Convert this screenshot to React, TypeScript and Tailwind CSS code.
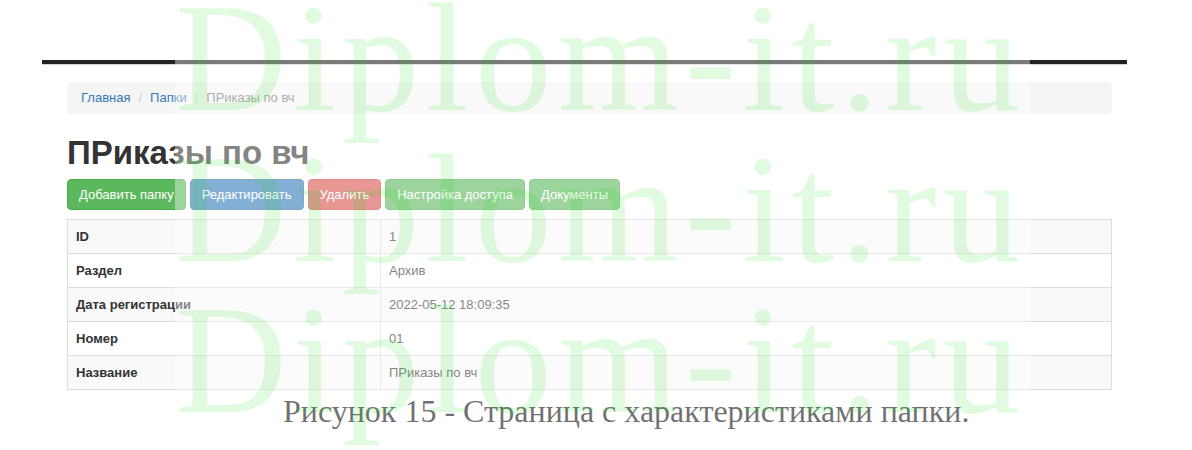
import React from 'react';

const rows: [string, string][] = [
  ['ID', '1'],
  ['Раздел', 'Архив'],
  ['Дата регистрации', '2022-05-12 18:09:35'],
  ['Номер', '01'],
  ['Название', 'ПРиказы по вч'],
];

const buttons = [
  { label: 'Добавить папку', cls: 'bg-[#5cb85c] border-[#4cae4c]' },
  { label: 'Редактировать', cls: 'bg-[#337ab7] border-[#2e6da4]' },
  { label: 'Удалить', cls: 'bg-[#d9534f] border-[#d43f3a]' },
  { label: 'Настройка доступа', cls: 'bg-[#5cb85c] border-[#4cae4c]' },
  { label: 'Документы', cls: 'bg-[#5cb85c] border-[#4cae4c]' },
];

export default function App() {
  return (
    <div className="relative h-[450px] w-[1192px] overflow-hidden bg-white font-['Liberation_Sans',Arial,sans-serif] text-[13px] text-[#333]">
      {/* top navbar line */}
      <div className="ml-[42px] w-[1085px] pt-[60px]">
        <div className="h-[4px] bg-[#222]" />
        <div className="h-px bg-[#d5d5d5]" />
      </div>

      <div className="ml-[67px] w-[1045px]">
        <div className="mt-[17px] flex h-[32px] items-center gap-[6px] rounded bg-[#f5f5f5] px-[14px] leading-[18px]">
          <span className="text-[#337ab7]">Главная</span>
          <span className="px-[2px] text-[#ccc]">/</span>
          <span className="text-[#337ab7]">Папки</span>
          <span className="px-[2px] text-[#ccc]">/</span>
          <span className="text-[#777]">ПРиказы по вч</span>
        </div>

        <h1 className="mt-[21px] text-[33px] font-semibold leading-[36px] text-[#333]">ПРиказы по вч</h1>

        <div className="mt-[8px] flex gap-[4px]">
          {buttons.map((b) => (
            <div
              key={b.label}
              className={`h-[31px] rounded border px-[11px] leading-[29px] text-white ${b.cls}`}
            >
              {b.label}
            </div>
          ))}
        </div>

        <table className="mt-[9px] w-full border-collapse border border-[#ddd]">
          <tbody>
            {rows.map(([k, v], i) => (
              <tr key={k} className={i % 2 === 0 ? 'bg-[#f9f9f9]' : 'bg-white'}>
                <th className="h-[34px] w-[313px] border border-[#ddd] px-[8px] text-left font-bold">{k}</th>
                <td className="h-[34px] border border-[#ddd] px-[8px]">{v}</td>
              </tr>
            ))}
          </tbody>
        </table>
      </div>

      <p className="ml-[283px] mt-[3px] font-['Liberation_Serif','Times_New_Roman',serif] text-[32px] leading-[36px] text-[#111]">
        Рисунок 15 - Страница с характеристиками папки.
      </p>

      {/* watermark overlay */}
      <div className="pointer-events-none absolute left-[175px] top-0 h-[450px] w-[855px] bg-white/40">
        <div className="-mt-[17px] font-['Liberation_Serif','Times_New_Roman',serif] text-[155px] leading-[151px] tracking-[6px] whitespace-nowrap text-[rgba(0,220,0,0.12)]">
          <div>Diplom-it.ru</div>
          <div>Diplom-it.ru</div>
          <div>Diplom-it.ru</div>
        </div>
      </div>
    </div>
  );
}
